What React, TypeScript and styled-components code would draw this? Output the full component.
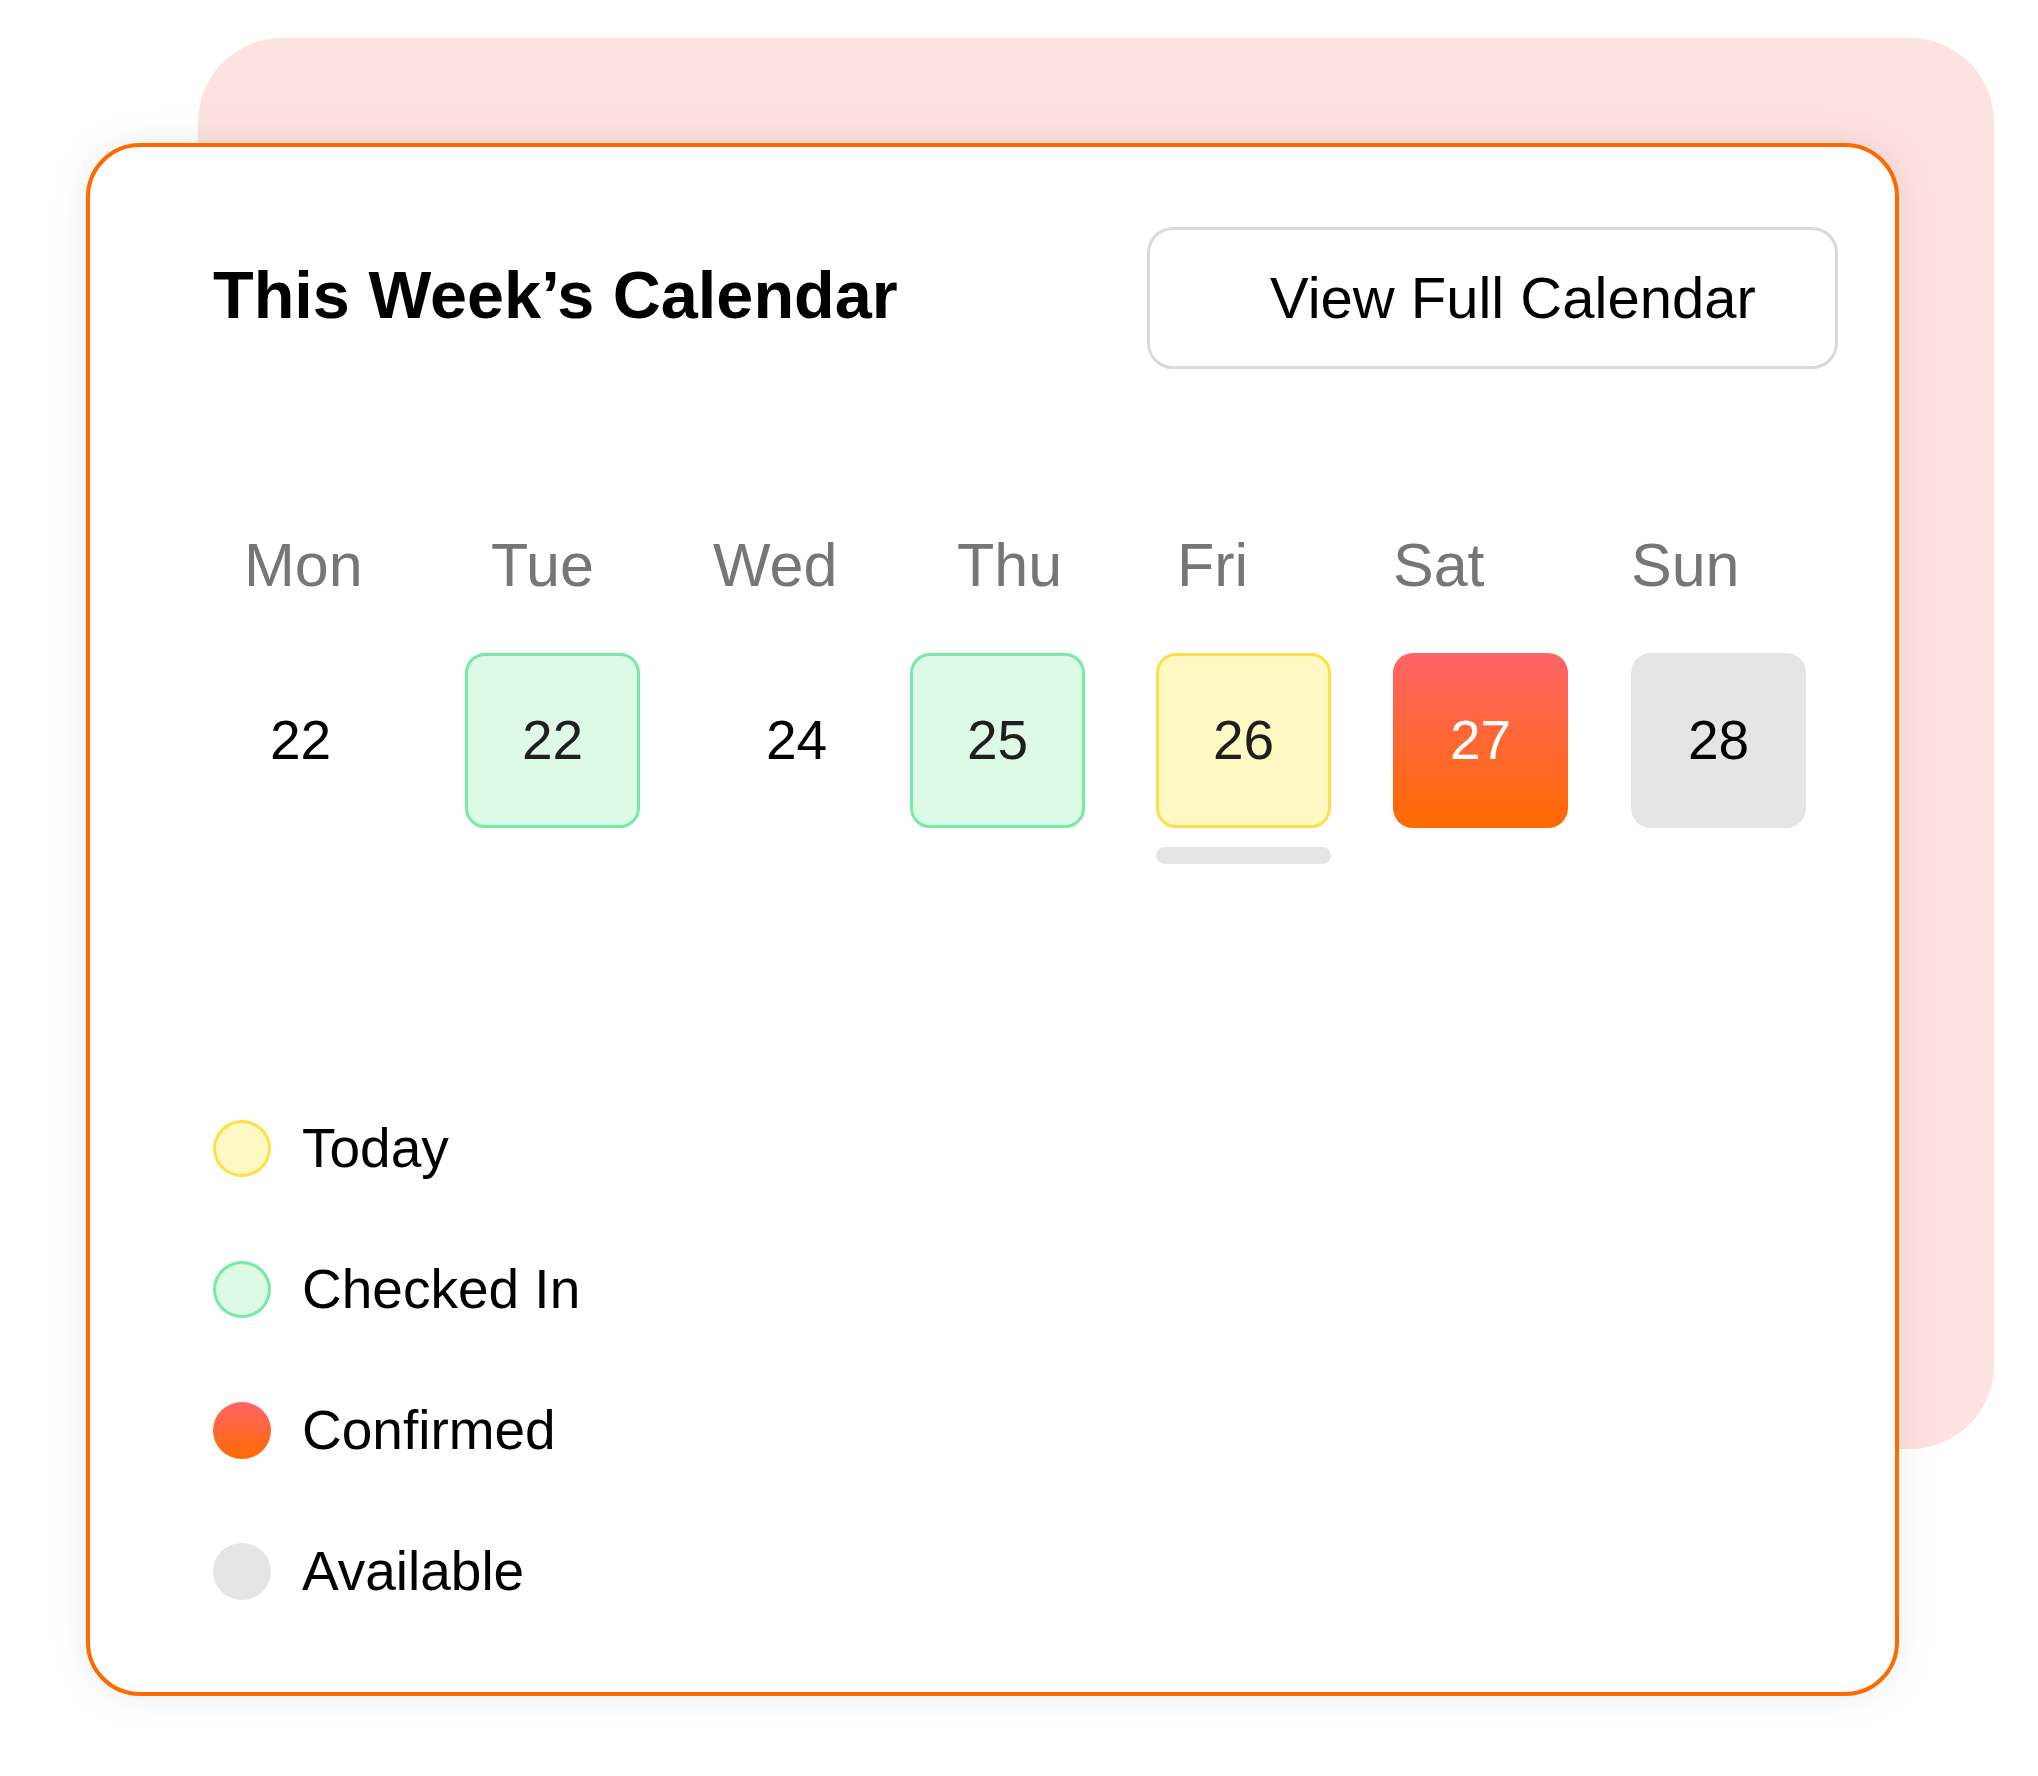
import styled, { createGlobalStyle } from "styled-components";

const GlobalStyle = createGlobalStyle`
  * { box-sizing: border-box; }
  body {
    margin: 0;
    background: #ffffff;
    font-family: "Liberation Sans", Arial, sans-serif;
  }
`;

const Stage = styled.div`
  position: relative;
  width: 2038px;
  height: 1776px;
  padding: 143px 0 0 86px;
  overflow: hidden;
`;

// decorative pink layer that sits behind the card
const Backdrop = styled.div`
  position: absolute;
  left: 198px;
  top: 38px;
  width: 1796px;
  height: 1411px;
  border-radius: 84px;
  background: #fee2e1;
`;

const Card = styled.section`
  position: relative;
  z-index: 1;
  width: 1813px;
  height: 1553px;
  border: 4px solid #ff6a00;
  border-radius: 54px;
  background: #ffffff;
  box-shadow: 0 0 40px rgba(0, 0, 0, 0.08);
  padding: 80px 57px 0 123px;
  display: flex;
  flex-direction: column;
`;

const Header = styled.div`
  display: flex;
  align-items: center;
  justify-content: space-between;
`;

const Title = styled.h2`
  margin: 0;
  font-size: 66.6px;
  line-height: 1;
  font-weight: 700;
  color: #000;
  position: relative;
  top: -3px;
`;

const FullButton = styled.button`
  width: 691px;
  height: 142px;
  border: 3px solid #d9d9d9;
  border-radius: 26px;
  background: #fff;
  padding: 0 78px 0 120px;
  font-family: inherit;
  font-size: 58px;
  line-height: 1;
  color: #000;
  text-align: left;
  white-space: nowrap;
`;

const DayHeaders = styled.div`
  display: grid;
  grid-template-columns: 247px 222px 244px 220px 216px 238px 1fr;
  padding-left: 31px;
  margin-top: 166px;
`;

const DayName = styled.div`
  font-size: 61px;
  line-height: 1;
  color: #767676;
`;

const DateRow = styled.div`
  display: grid;
  grid-template-columns: 252px 244px 201px 246px 237px 238px 175px;
  margin-top: 57px;
`;

const DateColumn = styled.div`
  display: flex;
  flex-direction: column;
  gap: 19px;
`;

type Status = "none" | "checked" | "today" | "confirmed" | "available";

const boxStyles: Record<Status, string> = {
  none: "background: transparent; border: 3px solid transparent; color: #000;",
  checked: "background: #dcfae6; border: 3px solid #76eaa6; color: #1f1f1f;",
  today: "background: #fef9c3; border: 3px solid #fde047; color: #1f1f1f;",
  confirmed:
    "background: linear-gradient(180deg, #ff6467 0%, #ff6a00 100%); border: 3px solid transparent; color: #fff;",
  available: "background: #e5e5e5; border: 3px solid transparent; color: #000;",
};

const DateBox = styled.div<{ $status: Status }>`
  width: 175px;
  height: 175px;
  border-radius: 20px;
  display: flex;
  align-items: center;
  justify-content: center;
  font-size: 55px;
  line-height: 1;
  ${(p) => boxStyles[p.$status]}
  background-origin: border-box;
`;

const TodayBar = styled.div`
  width: 175px;
  height: 17px;
  border-radius: 9px;
  background: #e5e5e5;
`;

const Legend = styled.div`
  display: flex;
  flex-direction: column;
  gap: 84px;
  margin-top: 256px;
`;

const LegendRow = styled.div`
  display: flex;
  align-items: center;
  gap: 31px;
`;

const Dot = styled.span<{ $status: Status }>`
  width: 58px;
  height: 57px;
  border-radius: 50%;
  flex-shrink: 0;
  ${(p) => boxStyles[p.$status]}
  border-width: 3.5px;
  background-origin: border-box;
`;

const LegendLabel = styled.span`
  font-size: 55px;
  line-height: 1;
  color: #000;
`;

const days = ["Mon", "Tue", "Wed", "Thu", "Fri", "Sat", "Sun"];

const dates: { n: number; status: Status; isToday?: boolean }[] = [
  { n: 22, status: "none" },
  { n: 22, status: "checked" },
  { n: 24, status: "none" },
  { n: 25, status: "checked" },
  { n: 26, status: "today", isToday: true },
  { n: 27, status: "confirmed" },
  { n: 28, status: "available" },
];

const legend: { label: string; status: Status }[] = [
  { label: "Today", status: "today" },
  { label: "Checked In", status: "checked" },
  { label: "Confirmed", status: "confirmed" },
  { label: "Available", status: "available" },
];

export default function App() {
  return (
    <>
      <GlobalStyle />
      <Stage>
        <Backdrop />
        <Card>
          <Header>
            <Title>This Week’s Calendar</Title>
            <FullButton>View Full Calendar</FullButton>
          </Header>

          <DayHeaders>
            {days.map((d) => (
              <DayName key={d}>{d}</DayName>
            ))}
          </DayHeaders>

          <DateRow>
            {dates.map((d, i) => (
              <DateColumn key={i}>
                <DateBox $status={d.status}>{d.n}</DateBox>
                {d.isToday && <TodayBar />}
              </DateColumn>
            ))}
          </DateRow>

          <Legend>
            {legend.map((l) => (
              <LegendRow key={l.label}>
                <Dot $status={l.status} />
                <LegendLabel>{l.label}</LegendLabel>
              </LegendRow>
            ))}
          </Legend>
        </Card>
      </Stage>
    </>
  );
}
